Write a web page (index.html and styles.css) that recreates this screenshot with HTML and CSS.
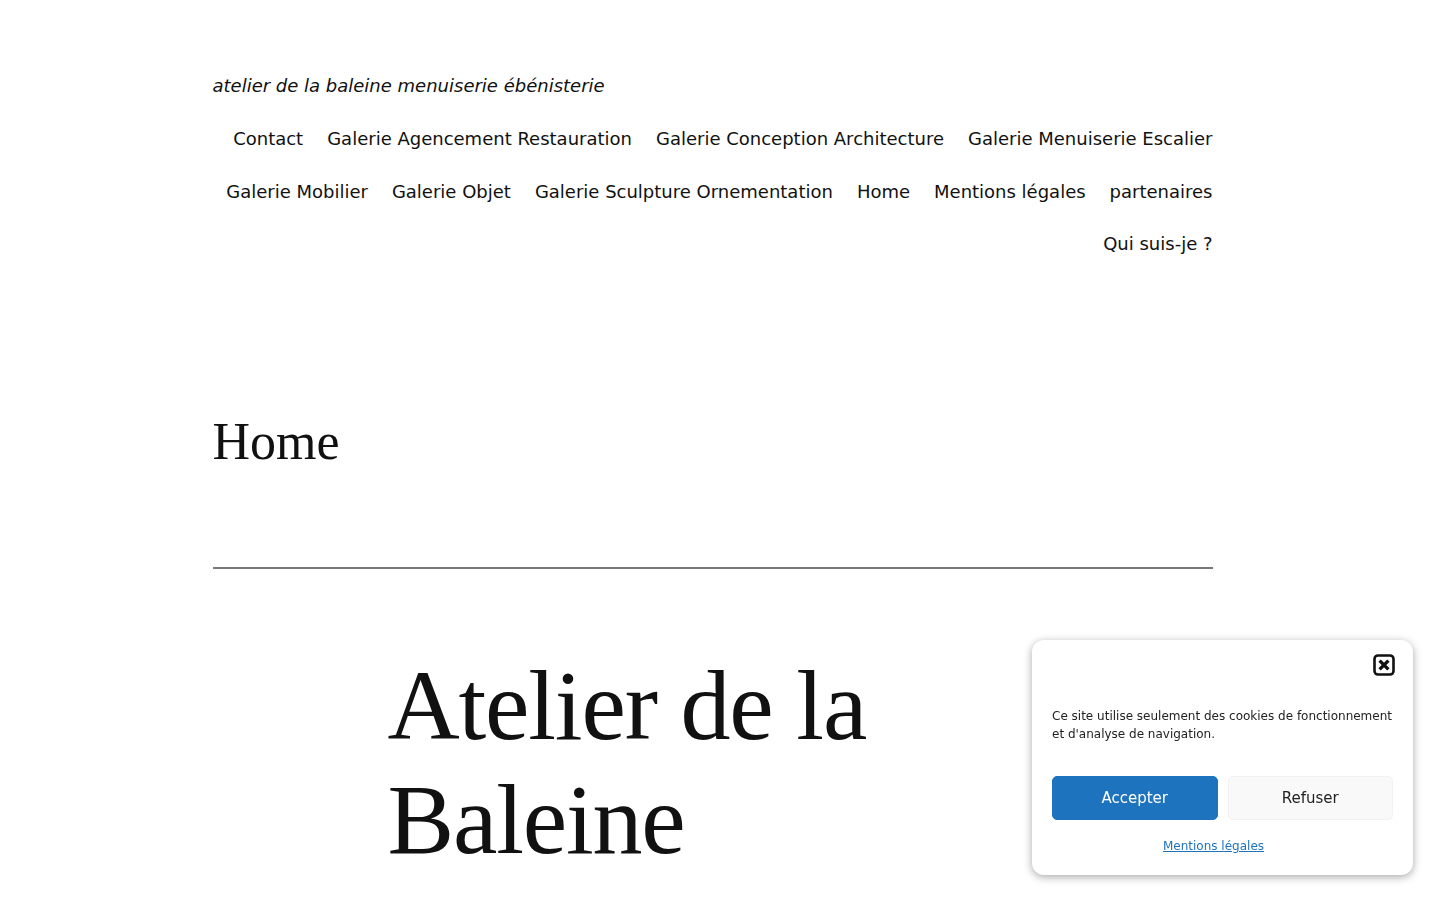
FILE: index.html
```html
<!DOCTYPE html>
<html lang="fr">
<head>
<meta charset="utf-8">
<title>Home – atelier de la baleine menuiserie ébénisterie</title>
<link rel="stylesheet" href="styles.css">
</head>
<body>
<header class="site-header">
  <p class="site-title">atelier de la baleine menuiserie ébénisterie</p>
  <nav class="site-nav">
    <ul class="nav-list">
      <li><a href="#">Contact</a></li>
      <li><a href="#">Galerie Agencement Restauration</a></li>
      <li><a href="#">Galerie Conception Architecture</a></li>
      <li><a href="#">Galerie Menuiserie Escalier</a></li>
      <li><a href="#">Galerie Mobilier</a></li>
      <li><a href="#">Galerie Objet</a></li>
      <li><a href="#">Galerie Sculpture Ornementation</a></li>
      <li><a href="#">Home</a></li>
      <li><a href="#">Mentions légales</a></li>
      <li><a href="#">partenaires</a></li>
      <li><a href="#">Qui suis-je ?</a></li>
    </ul>
  </nav>
</header>

<main class="site-main">
  <h1 class="page-title">Home</h1>
  <hr class="separator">
  <div class="entry">
    <h2 class="hero-title">Atelier de la Baleine</h2>
  </div>
</main>

<div class="cookie-banner" role="dialog" aria-label="Cookies">
  <div class="cookie-head">
    <button class="cookie-close" aria-label="Fermer">
      <svg width="22" height="22" viewBox="0 0 22 22" aria-hidden="true">
        <rect x="1.5" y="1.5" width="19" height="19" rx="3.5" fill="none" stroke="#111" stroke-width="2.6"/>
        <path d="M6.6 6.6 L15.4 15.4 M15.4 6.6 L6.6 15.4" stroke="#111" stroke-width="3.4" stroke-linecap="butt"/>
      </svg>
    </button>
  </div>
  <p class="cookie-text">Ce site utilise seulement des cookies de fonctionnement et d'analyse de navigation.</p>
  <div class="cookie-buttons">
    <button class="btn btn-accept">Accepter</button>
    <button class="btn btn-refuse">Refuser</button>
  </div>
  <a class="cookie-link" href="#">Mentions légales</a>
</div>
</body>
</html>
```

FILE: styles.css
```css
html, body {
  margin: 0;
  padding: 0;
  background: #fff;
}

body {
  width: 1425px;
  font-family: "DejaVu Sans", "Liberation Sans", sans-serif;
  color: #111;
}

.site-header {
  width: 1000px;
  margin: 0 auto;
  padding-top: 72px;
}

.site-title {
  margin: 0;
  font-size: 18px;
  line-height: 27px;
  font-style: italic;
  color: #111;
}

.site-nav {
  margin-top: 26px;
}

.nav-list {
  list-style: none;
  margin: 0;
  padding: 0;
  display: flex;
  flex-wrap: wrap;
  justify-content: flex-end;
  column-gap: 24px;
  row-gap: 24.5px;
}

.nav-list a {
  display: block;
  font-size: 18px;
  line-height: 28px;
  color: #111;
  text-decoration: none;
}

.site-main {
  padding-bottom: 120px;
}

.page-title {
  width: 1000px;
  margin: 153px auto 0;
  font-family: "Liberation Serif", "Times New Roman", serif;
  font-weight: normal;
  font-size: 52px;
  line-height: 1.2;
  color: #111;
}

.separator {
  width: 1000px;
  margin: 94px auto 0;
  border: 0;
  border-top: 2px solid #777;
  height: 0;
}

.entry {
  width: 650px;
  margin: 80px auto 0;
}

.hero-title {
  margin: 0;
  font-family: "Liberation Serif", "Times New Roman", serif;
  font-weight: normal;
  font-size: 100px;
  line-height: 114px;
  letter-spacing: -1.2px;
  color: #111;
}

/* Cookie banner */
.cookie-banner {
  position: fixed;
  right: 27px;
  bottom: 25px;
  width: 381px;
  box-sizing: border-box;
  padding: 14px 20px 20px;
  background: #fff;
  border-radius: 12px;
  box-shadow: 0 2px 8px rgba(0, 0, 0, 0.35);
  display: flex;
  flex-direction: column;
  font-family: "DejaVu Sans", "Liberation Sans", sans-serif;
}

.cookie-head {
  display: flex;
  justify-content: flex-end;
  margin-right: -2px;
}

.cookie-close {
  width: 22px;
  height: 22px;
  padding: 0;
  border: 0;
  background: none;
  cursor: pointer;
  display: block;
}

.cookie-close svg {
  display: block;
}

.cookie-text {
  margin: 31px 0 0;
  font-size: 12px;
  line-height: 18px;
  color: #222;
}

.cookie-buttons {
  margin-top: 33px;
  display: grid;
  grid-template-columns: 1fr 1fr;
  gap: 10px;
}

.btn {
  height: 44px;
  border-radius: 5px;
  font-family: "DejaVu Sans", "Liberation Sans", sans-serif;
  font-size: 15px;
  cursor: pointer;
}

.btn-accept {
  background: #1e73be;
  border: 1px solid #1e73be;
  color: #fff;
}

.btn-refuse {
  background: #f9f9f9;
  border: 1px solid #f2f2f2;
  color: #222;
}

.cookie-link {
  margin-top: 17px;
  margin-right: 18px;
  align-self: center;
  font-size: 12px;
  line-height: 18px;
  color: #1e73be;
  text-decoration: underline;
}
```
